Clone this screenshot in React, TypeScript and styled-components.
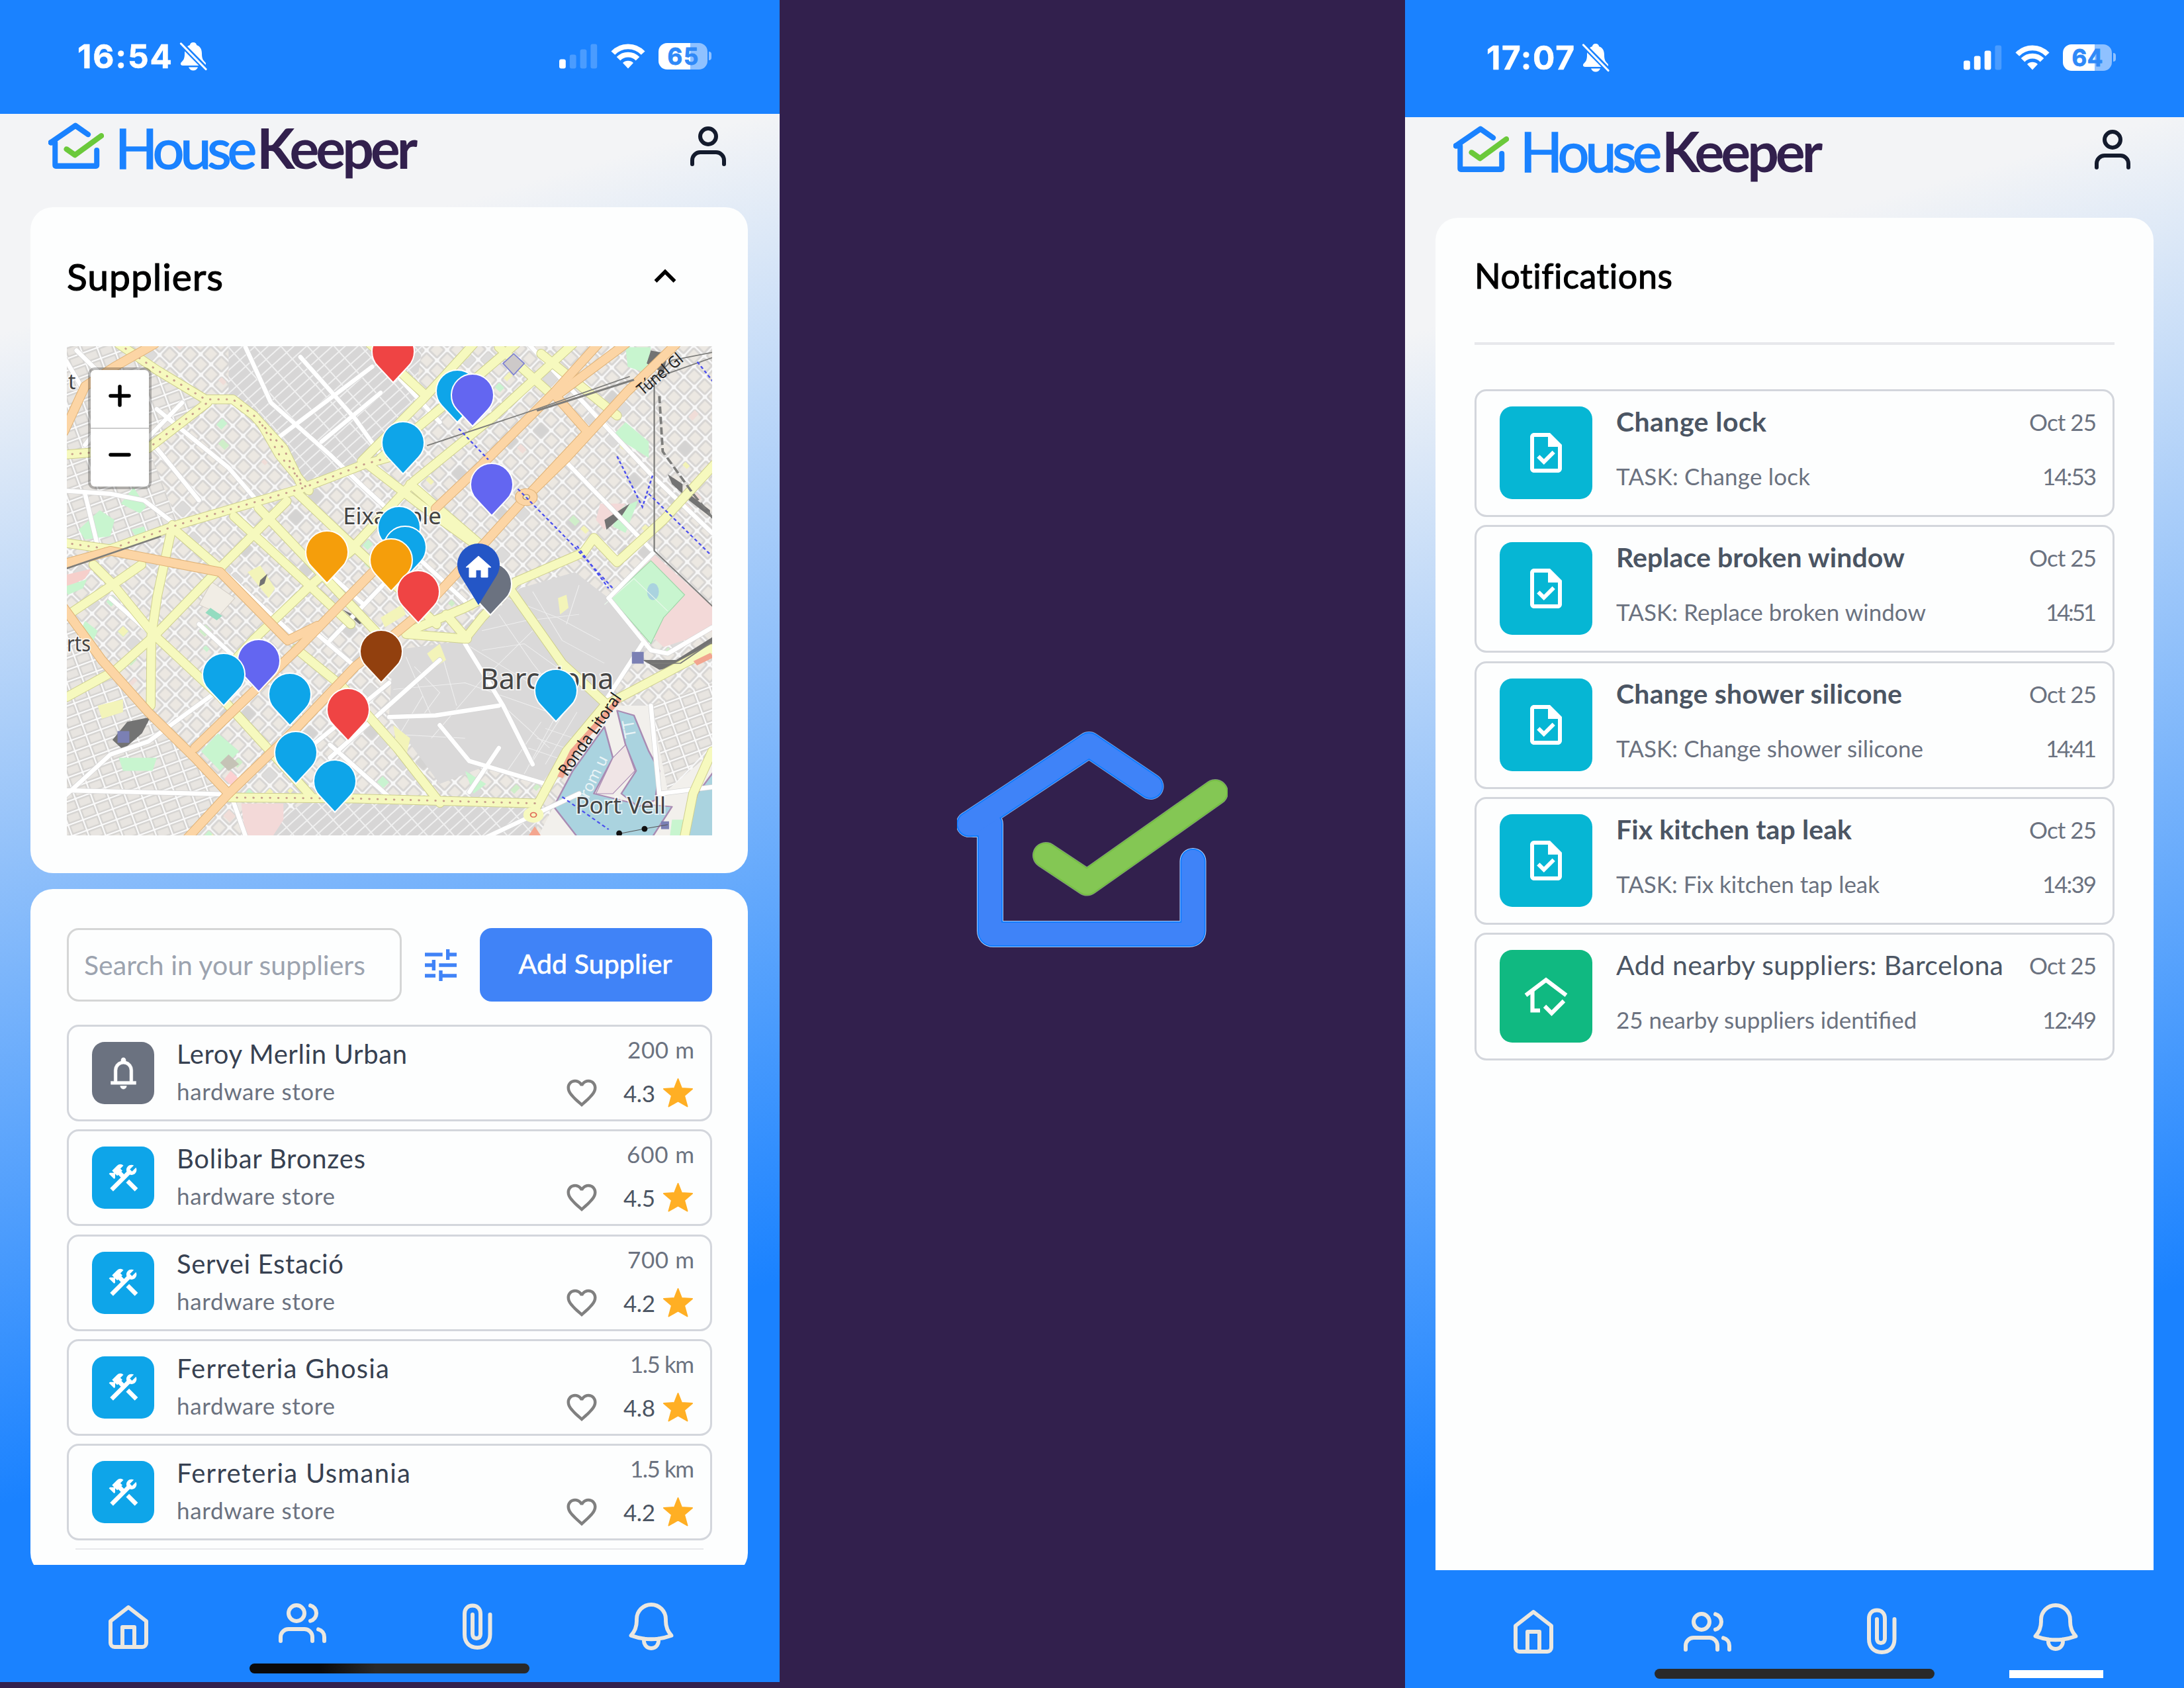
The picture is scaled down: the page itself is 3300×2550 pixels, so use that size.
import React, { useLayoutEffect, useRef, useState } from 'react';
import styled, { createGlobalStyle } from 'styled-components';
import { FiHome, FiUsers, FiUser } from 'react-icons/fi';
import { MdConstruction, MdTune, MdFavoriteBorder, MdOutlineTask } from 'react-icons/md';

const GlobalStyle = createGlobalStyle`
  * { box-sizing: border-box; }
  body { margin: 0; background: #32204d; }
`;

const UI_FONT = "'Lato', 'Liberation Sans', sans-serif";
const SYSTEM_FONT = "'Inter', 'Liberation Sans', sans-serif";
const BLUE = '#1a82ff';

/* ---------- text ---------- */

const LabelText = styled.span<{ $size: number; $line: number; $weight: number; $color: string; $system?: boolean; $ink?: number }>`
  display: block;
  flex: none;
  white-space: nowrap;
  font-family: ${p => (p.$system ? SYSTEM_FONT : UI_FONT)};
  font-size: ${p => p.$size}px;
  line-height: ${p => p.$line}px;
  font-weight: ${p => p.$weight};
  color: ${p => p.$color};
  -webkit-text-stroke: ${p => p.$ink ?? 0}px ${p => p.$color};
`;

type LabelProps = {
  children: string;
  size: number;
  line: number;
  color: string;
  weight?: number;
  width?: number;
  system?: boolean;
  ink?: number;
};

/* Tracks its letters so that the text run takes the given width. */
function Label({ children, size, line, color, weight = 400, width, system, ink }: LabelProps) {
  const ref = useRef<HTMLSpanElement>(null);
  const [tracking, setTracking] = useState(0);
  useLayoutEffect(() => {
    const el = ref.current;
    if (!el || !width) return;
    const range = document.createRange();
    range.selectNodeContents(el);
    const natural = range.getBoundingClientRect().width - tracking * children.length;
    const next = (width - natural) / (children.length - 1);
    if (Math.abs(next - tracking) > 0.01) setTracking(next);
  }, [children, width, tracking]);
  return (
    <LabelText
      ref={ref}
      $size={size}
      $line={line}
      $weight={weight}
      $color={color}
      $system={system}
      $ink={ink}
      style={{ letterSpacing: tracking, marginRight: -tracking }}
    >
      {children}
    </LabelText>
  );
}

/* ---------- brand mark ---------- */

const ROOF = 'M63.5 194 L244.5 74 L337.5 137';
const WALLS = 'M63.5 194 H95 V355 Q95 360 100 360 H396 Q401.500 360 401.500 355 V250';
const TICK = 'M179 241 L241.500 282.500 L435 146';

function Mark({ width, height, blue, green, edged }: { width: number; height: number; blue: string; green: string; edged?: boolean }) {
  return (
    <svg width={width} height={height} viewBox="45 52 409 328" preserveAspectRatio="none" fill="none" strokeLinecap="round" strokeLinejoin="round">
      {edged && (
        <g strokeWidth="40">
          <path d={WALLS} stroke="#b3cdfa" />
          <path d={ROOF} stroke="#7f9fe0" />
          <path d={TICK} stroke="#7f9a78" />
        </g>
      )}
      {edged && (
        <g strokeWidth="38">
          <path d={WALLS} stroke="#0a7bff" />
          <path d={ROOF} stroke="#0a7bff" />
          <path d={TICK} stroke="#76c043" />
        </g>
      )}
      <g strokeWidth={edged ? 34.5 : 39}>
        <path d={WALLS} stroke={blue} />
        <path d={ROOF} stroke={blue} />
        <path d={TICK} stroke={green} />
      </g>
    </svg>
  );
}

/* ---------- phone shell ---------- */

const Page = styled.main`
  width: 3300px;
  height: 2550px;
  display: flex;
  align-items: flex-start;
  background: #32204d;
  overflow: hidden;
`;

const Phone = styled.section<{ $width: number; $height: number }>`
  flex: none;
  display: flex;
  flex-direction: column;
  width: ${p => p.$width}px;
  height: ${p => p.$height}px;
  overflow: hidden;
  background: linear-gradient(164deg, #f3f4f6 17.5%, ${BLUE} 79%);
`;

const Splash = styled.section`
  flex: 1;
  align-self: stretch;
  display: flex;
  justify-content: center;
  align-items: center;
  padding: 0 1px 16px 0;
`;

const StatusBar = styled.div<{ $height: number; $left: number }>`
  flex: none;
  height: ${p => p.$height}px;
  display: flex;
  align-items: center;
  justify-content: space-between;
  padding: 0 109px 3px ${p => p.$left}px;
  background: ${BLUE};
`;

const StatusGroup = styled.div<{ $gap: number }>`
  display: flex;
  align-items: center;
  gap: ${p => p.$gap}px;
`;

const Battery = styled.div<{ $level: number }>`
  position: relative;
  width: 74px;
  height: 40px;
  display: flex;
  align-items: center;
  justify-content: center;
  border-radius: 13px;
  background: linear-gradient(90deg, #fff ${p => p.$level}%, #8fc1ff ${p => p.$level}%);
  &::after {
    content: '';
    position: absolute;
    left: 76px;
    top: 13px;
    width: 4px;
    height: 13px;
    border-radius: 0 4px 4px 0;
    background: #8fc1ff;
  }
`;

const BellSlash = () => (
  <svg width="42" height="44" viewBox="0 0 42 44">
    <path d="M21 1c3 0 5 2 5 4 6 2 8 7 8 13 0 8 2 10 5 13 2 2 1 5-2 5H5c-3 0-4-3-2-5 3-3 5-5 5-13 0-6 2-11 8-13 0-2 2-4 5-4z" fill="#fff" />
    <path d="M14 38.500h14c-1 3-4 5-7 5s-6-2-7-5z" fill="#fff" />
    <path d="M3 3.500L41 42" stroke={BLUE} strokeWidth="8" />
    <path d="M2.500 3L40 41.500" stroke="#fff" strokeWidth="3.200" strokeLinecap="round" />
  </svg>
);

const Signal = ({ bars }: { bars: number }) => (
  <svg width="58" height="38" viewBox="0 0 58 38">
    {[14, 21, 29, 37].map((h, i) => (
      <rect key={h} x={i * 15.8} y={37.5 - h} width="9.800" height={h} rx="3" fill={i < bars ? '#fff' : '#4a9cff'} />
    ))}
  </svg>
);

const Wifi = () => (
  <svg width="52" height="38" viewBox="0 0 52 38" fill="none" stroke="#fff" strokeWidth="7.800">
    <path d="M3.300 14.200C15.500 1 36.500 1 48.700 14.200" />
    <path d="M11.500 22.800C19.500 14.500 32.500 14.500 40.500 22.800" />
    <path d="M26 37.500l-8-8.500c4.500-4.200 11.500-4.200 16 0z" fill="#fff" stroke="none" />
  </svg>
);

function Status({ time, timeWidth, left, bars, charge, height }: { time: string; timeWidth: number; left: number; bars: number; charge: string; height: number }) {
  return (
    <StatusBar $height={height} $left={left}>
      <StatusGroup $gap={11}>
        <Label size={49.5} line={60} weight={700} color="#fff" width={timeWidth} ink={0.6} system>{time}</Label>
        <BellSlash />
      </StatusGroup>
      <StatusGroup $gap={20}>
        <Signal bars={bars} />
        <Wifi />
        <Battery $level={65}>
          <Label size={35} line={38} weight={700} color="#2f89f8" width={47} ink={0.8} system>{charge}</Label>
        </Battery>
      </StatusGroup>
    </StatusBar>
  );
}

const BrandBar = styled.header<{ $height: number }>`
  flex: none;
  height: ${p => p.$height}px;
  display: flex;
  align-items: flex-start;
  padding: 13px 72px 0 73px;
  color: #141b2d;
  > svg:last-child { margin: 0 0 0 auto; }
`;

const Wordmark = styled.div`
  display: flex;
  gap: 0;
  margin: -4px 0 0 17px;
`;

function Brand({ height }: { height: number }) {
  return (
    <BrandBar $height={height}>
      <Mark width={84} height={70} blue={BLUE} green="#6bc93b" />
      <Wordmark>
        <Label size={84} line={84} color={BLUE} width={214} ink={1.7}>House</Label>
        <Label size={84} line={84} color="#32204d" weight={700} width={243}>Keeper</Label>
      </Wordmark>
      <FiUser size={72} />
    </BrandBar>
  );
}

const Body = styled.div<{ $right: number }>`
  flex: 1;
  min-height: 0;
  overflow: hidden;
  display: flex;
  flex-direction: column;
  gap: 24px;
  padding: 0 ${p => p.$right}px 0 46px;
`;

const Card = styled.section<{ $height: number; $pad: string }>`
  flex: none;
  display: flex;
  flex-direction: column;
  height: ${p => p.$height}px;
  padding: ${p => p.$pad};
  border-radius: 34px;
  background: #fdfefe;
`;

/* ---------- bottom navigation ---------- */

const NavBar = styled.nav<{ $height: number }>`
  position: relative;
  flex: none;
  height: ${p => p.$height}px;
  display: grid;
  grid-template-columns: repeat(4, 1fr);
  align-items: start;
  justify-items: center;
  padding: 0 62px;
  background: ${BLUE};
  color: #ebe7df;
`;

const NavItem = styled.div<{ $top: number }>`
  display: flex;
  padding-top: ${p => p.$top}px;
`;

const HomeIndicator = styled.div<{ $top: number; $shaded?: boolean }>`
  position: absolute;
  left: 377px;
  top: ${p => p.$top}px;
  width: 423px;
  height: 15px;
  border-radius: 8px;
  background: ${p => (p.$shaded ? 'linear-gradient(90deg, #0a0a0a 25%, #292929 45%)' : '#292929')};
`;

const ActiveLine = styled.div`
  position: absolute;
  left: 913px;
  top: 151px;
  width: 142px;
  height: 12px;
  background: #fff;
`;

const Clip = () => (
  <svg width="48" height="72" viewBox="0 0 48 72" fill="none" stroke="currentColor" strokeWidth="6" strokeLinecap="round">
    <path d="M43.500 18V48C43.500 60.500 36 68 24.300 68C12.500 68 5 60.500 5 48V17C5 9 10 4.500 17 4.500C24 4.500 29 9 29 17V47.500C29 51.500 27 54 23 54C19 54 17 51.500 17 47.500V18" />
  </svg>
);

const Bell = () => (
  <svg width="88" height="88" viewBox="0 0 24 24" fill="none" stroke="currentColor" strokeWidth="1.600" strokeLinecap="round" strokeLinejoin="round">
    <path d="M14.857 17.082a23.848 23.848 0 0 0 5.454-1.310A8.967 8.967 0 0 1 18 9.750V9A6 6 0 0 0 6 9v.75a8.967 8.967 0 0 1-2.312 6.022c1.733.64 3.560 1.085 5.455 1.310m5.714 0a24.255 24.255 0 0 1-5.714 0m5.714 0a3 3 0 1 1-5.714 0" />
  </svg>
);

function Navigation({ height, tops, children }: { height: number; tops: number[]; children: React.ReactNode }) {
  return (
    <NavBar $height={height}>
      <NavItem $top={tops[0]}><FiHome size={72} /></NavItem>
      <NavItem $top={tops[1]}><FiUsers size={72} /></NavItem>
      <NavItem $top={tops[2]}><Clip /></NavItem>
      <NavItem $top={tops[3]}><Bell /></NavItem>
      {children}
    </NavBar>
  );
}

/* ---------- map ---------- */

const MapFrame = styled.div`
  position: relative;
  width: 975px;
  height: 739px;
  overflow: hidden;
  background: #e4e3e1;
`;

const Pin = styled.svg`
  position: absolute;
  width: 70px;
  height: 84px;
`;

const ZoomBox = styled.div`
  position: absolute;
  left: 32px;
  top: 32px;
  width: 96px;
  height: 184px;
  border: 4px solid rgba(0, 0, 0, 0.25);
  border-radius: 10px;
  background-clip: padding-box;
  background-color: #fff;
  display: flex;
  flex-direction: column;
`;

const ZoomButton = styled.button`
  flex: 1;
  display: flex;
  align-items: center;
  justify-content: center;
  padding: 0 0 10px;
  border: 0;
  background: transparent;
  & + & { border-top: 2px solid #ccc; }
`;

/* Streets in survey units; the group that draws them scales to pixels. */
const ORANGE = [
  'M10 290L60 150L130 90L225 20', 'M300 1540L400 1400L560 1200L700 1010L850 850L1000 640L1105 490L1200 370L1345 165L1460 20',
  'M400 1400L320 1290L210 1150L100 990L10 830', 'M10 695L120 655L380 720L540 930L610 885',
  'M320 1260L560 960L745 715', 'M890 525L1000 390L1170 170L1275 20', 'M1105 490L1250 290L1175 180L1340 20',
];
const YELLOW = [
  'M140 20L230 100L345 190L410 190L460 240L530 340L575 460', 'M10 360L210 340L350 200',
  'M10 630L120 650L280 575L450 510L570 465L720 390L830 350', 'M400 1412L700 1415L1130 1430',
  'M480 270L520 360L590 470', 'M725 385L850 510L1000 650L1190 1000L1290 1120',
  'M1125 1450L1200 1270L1290 1130L1545 955', 'M715 380L860 190L910 120L980 20',
  'M690 650L840 440L1030 240L1215 20', 'M760 370L900 220L1080 20', 'M1140 50L1320 240', 'M1040 30L1160 170',
  'M820 910L960 925L1000 860L1080 750L1240 660L1265 615L1320 690L1430 560L1550 390',
  'M735 20L860 170', 'M830 900L960 830L1020 790', 'M915 850L965 925', 'M1545 1270L1500 1400L1480 1530', 'M830 450L1000 640',
];
/* Eixample avenues, already in pixels. */
const AVENUES = [
  'M347 220L500 364L560 420', 'M290 244L467 430L500 470', 'M253 257L370 364L430 420', 'M163 277L233 337',
  'M333 234L230 337L133 437L73 490L0 530', 'M433 307L367 363L283 443L258 470', 'M40 330L70 360L133 437L233 530L310 614L370 680',
  'M113 330L70 360L0 407', 'M160 270L137 377L128 437L127 543', 'M347 457L417 514L500 607L565 690',
];
const WHITE = [
  'M10 1390L400 1402', 'M515 310L740 90', 'M440 30L500 200L640 360L720 460L830 590', 'M10 1410L120 1280L210 1240L400 1060',
  'M640 930L780 740', 'M1300 800L1410 655', 'M1300 800L1400 960L1440 970L1545 890', 'M900 1190L970 1300L1150 1370', 'M1290 1120L1380 940',
  'M780 1165L890 1160L1040 1130', 'M730 20L900 260', 'M960 940L1050 1130L1120 1310', 'M600 1250L780 1060', 'M860 690L960 810',
  'M1110 20L1400 420L1545 600', 'M1190 370L1400 650', 'M600 900L700 1010', 'M640 1250L780 1410', 'M10 470L120 480L200 500L280 580',
  'M40 40L150 180L60 330', 'M410 1420L440 1530', 'M970 1395L1040 1260', 'M1400 1130L1420 1400L1545 1380', 'M1000 1540L1230 1400',
  'M450 510L720 820', 'M280 590L500 850L560 920', 'M330 880L480 1060', 'M120 800L260 960', 'M640 1290L900 990', 'M230 220L400 400L460 490',
  'M10 60L60 170', 'M230 340L330 500', 'M170 360L290 200', 'M60 480L90 640', 'M570 60L700 250L760 360', 'M620 320L760 170',
];
const PLACES: { x: number; y: number; w: number; h: number; c: string }[] = (() => {
  let seed = 7;
  const rnd = () => ((seed = (seed * 16807) % 2147483647) / 2147483647);
  const tones = ['#c9f3d0', '#f3f3b8', '#d4d3d2', '#dcdbda', '#d4d3d2', '#dddcdb', '#f0ddd8', '#dcdbda', '#cfeec9'];
  return Array.from({ length: 620 }, () => {
    const i = Math.floor(rnd() * 64) - 4;
    const j = Math.floor(rnd() * 64) - 32;
    const tone = tones[Math.floor(rnd() * tones.length)];
    const grey = tone.startsWith('#d');
    const size = grey ? 16 : 6 + rnd() * 8;
    return { x: i * 22 + 3, y: j * 22 + 3, w: size, h: grey ? 16 : 6 + rnd() * 8, c: tone };
  });
})();

const CityMap = () => (
  <svg width="975" height="739" viewBox="0 0 977 739" preserveAspectRatio="none" fill="none">
    <defs>
      <pattern id="blocks" width="22" height="22" patternUnits="userSpaceOnUse" patternTransform="rotate(44)">
        <rect width="22" height="22" fill="#f8f8f8" />
        <rect x="2.800" y="2.800" width="16.400" height="16.400" rx="1.500" fill="#ece8e2" stroke="#d7d5d3" strokeWidth="3" />
      </pattern>
      <pattern id="dense" width="30" height="13" patternUnits="userSpaceOnUse" patternTransform="scale(1.564 2.031) rotate(-42)">
        <rect width="30" height="13" fill="#f0f0f0" />
        <rect x="1" y="1" width="28" height="11" fill="#d7d6d6" />
      </pattern>
      <pattern id="mixed" width="24" height="17" patternUnits="userSpaceOnUse" patternTransform="scale(1.564 2.031) rotate(-20)">
        <rect width="24" height="17" fill="#fbfbfb" />
        <rect x="2.300" y="2.300" width="19.500" height="12.500" fill="#e8e5e1" stroke="#d3d1cf" strokeWidth="2.200" />
      </pattern>
    </defs>
    <rect width="977" height="739" fill="url(#blocks)" />
    <g transform="rotate(44)">
      {PLACES.map((p, i) => (
        <rect key={i} x={p.x} y={p.y} width={p.w} height={p.h} fill={p.c} />
      ))}
    </g>
    <g transform="scale(.6394 .4923) translate(-17 -27)">
      <path d="M400 20H860L840 190L720 380L570 450L470 240L400 190Z" fill="url(#dense)" />
      <path d="M10 20H140L340 190L210 330L10 350Z" fill="url(#mixed)" />
      <path d="M10 370L210 340L280 570L120 650L10 620Z" fill="url(#mixed)" />
      <path d="M10 850L210 1150L400 1400L300 1540H10Z" fill="url(#mixed)" />
      <path d="M600 1410L1130 1430V1540H440Z" fill="url(#dense)" />
    </g>
    <g transform="scale(.6394 .4923) translate(-17 -27)">
      <path d="M1290 1130L1400 1130L1440 1390L1545 1270V1540H1130Z" fill="#f2f0ec" />
      <path d="M1400 1130L1545 1060V1250L1440 1390Z" fill="url(#mixed)" />
      <path d="M790 960L960 930L1040 830L1090 770L1220 720L1300 800L1390 960L1290 1110L1200 1270L1140 1370L1000 1320L900 1370L780 1160Z" fill="#dad9d9" />
      <g stroke="#efefef" strokeWidth="1.800">
        <path d="M820 980L880 1160M900 950L940 1130M960 940L1190 1120M1040 850L1120 1000L1200 1130M1120 780L1190 930L1290 1000M790 1080L960 1060L1180 1160M820 1220L960 1230M1000 900L1100 870L1230 850M1140 1180L1060 1330M1180 1150L1100 1340M860 1100L790 1250M1000 1050L880 1230M1120 900L1010 1040M1050 1130L1160 1260M1230 760L1200 880" />
        <path d="M1150 1200L1240 1240M1130 1230L1220 1270M1110 1260L1200 1300M1200 1140L1120 1300M1225 1150L1150 1310M1060 800L1180 860L1280 930M1000 960L1100 940L1250 1080M840 1010L900 1090L860 1160" />
      </g>
      <g fill="#f3f4b9">
        <path d="M870 970L900 940L915 990L890 1010Z" /><path d="M1180 800L1200 790L1205 830L1185 850Z" /><path d="M90 1130L150 1110L150 1150L100 1170Z" /><path d="M760 860L810 820L820 850L770 890Z" />
        <path d="M445 720L475 700L510 770L495 800Z" /><path d="M790 1190L830 1230L820 1290L800 1270Z" />
      </g>
      <path d="M1305 800L1410 668L1550 830V900L1430 950Z" fill="#f3d9d8" />
      <path d="M1305 800L1400 685L1480 790L1430 860L1400 940Z" fill="#c8f5cf" stroke="#9fd6a8" strokeWidth="2" />
      <ellipse cx="1405" cy="780" rx="14" ry="26" fill="#aad3df" />
      <g fill="#c8f5cf">
        <path d="M175 460L205 520L190 540L145 510Z" /><path d="M45 590L95 530L130 560L120 610L60 620Z" /><path d="M375 1215L425 1270L380 1330L335 1270Z" />
        <path d="M140 1290L230 1290L220 1330L150 1330Z" /><path d="M1340 30H1400L1390 110L1345 90Z" /><path d="M1340 260L1395 320V370L1310 300Z" />
        <path d="M1320 530L1370 500L1340 600L1310 580Z" /><path d="M960 1330L1010 1370L980 1400Z" /><path d="M1450 1480H1480L1470 1530H1445Z" />
        <path d="M60 870L90 900L80 930L50 900Z" /><path d="M90 640L130 630L130 660L100 665Z" /><path d="M170 590L200 580L205 605L180 610Z" />
      </g>
      <path d="M1290 820L1360 740L1440 840" stroke="#eaf9ec" strokeWidth="2" />
      <path d="M360 750L415 800L380 850L330 820Z" fill="#f1ede5" stroke="#d6d0c8" strokeWidth="2" />
      <path d="M400 1280L425 1310L400 1330L380 1305Z" fill="#c5c3b6" />
      <path d="M405 1330L425 1355L410 1380L390 1355Z" fill="#fcd0d2" />
      <path d="M430 1430H530V1480L500 1540H440Z" fill="#f3d9d8" />
      <path d="M10 730L75 710L60 740L10 770Z" fill="#f6cfcb" />
      <path d="M10 765L65 742L55 770L20 790Z" fill="#c8f5cf" />
      <path d="M1280 510H1340L1290 590L1270 560Z" fill="#f3d9d8" />
      <path d="M357 830L385 855L372 868L345 845Z" fill="#94dcc0" />
      <g fill="#aad3df" stroke="#a98bb3" strokeWidth="4" strokeLinejoin="round">
        <path d="M1290 1195L1310 1290L1265 1400L1360 1430L1450 1440L1400 1540H1230L1170 1440L1215 1330Z" />
        <path d="M1320 1145L1360 1160L1395 1270L1420 1330L1410 1420L1370 1440L1330 1400L1365 1330L1340 1250Z" />
        <path d="M1550 1330L1510 1400L1480 1540H1550Z" />
      </g>
      <path d="M1310 1290L1340 1250L1362 1330L1310 1400L1270 1400Z" fill="#f0e5e6" stroke="#a98bb3" strokeWidth="2" />
      <g fill="#737373">
        <path d="M125 1235L160 1180L215 1165L195 1215L150 1265Z" /><path d="M1380 990L1460 990L1545 920V950L1460 1010L1420 1020Z" />
        <path d="M1290 560L1350 510L1330 550L1295 590Z" /><path d="M670 835L725 870L710 880Z" /><path d="M1400 40L1440 50L1430 110L1390 80Z" />
        <path d="M1440 420L1475 450V480L1450 450Z" /><path d="M1480 470L1540 530V550L1490 500Z" /><path d="M475 745L492 725L485 755L472 765Z" />
      </g>
      <g strokeLinecap="round" strokeLinejoin="round">
        {WHITE.map(d => <path key={d} d={d} stroke="#d6d6d6" strokeWidth="8" vectorEffect="non-scaling-stroke" />)}
        {WHITE.map(d => <path key={d} d={d} stroke="#fff" strokeWidth="6.500" vectorEffect="non-scaling-stroke" />)}
        {YELLOW.map(d => <path key={d} d={d} stroke="#cfd08e" strokeWidth="14.500" vectorEffect="non-scaling-stroke" />)}
      </g>
    </g>
    <g strokeLinecap="round" strokeLinejoin="round">
      {AVENUES.map(d => <path key={d} d={d} stroke="#cfd08e" strokeWidth="14.500" />)}
      {AVENUES.map(d => <path key={d} d={d} stroke="#f6f9be" strokeWidth="12.500" />)}
    </g>
    <g transform="scale(.6394 .4923) translate(-17 -27)">
      <g strokeLinecap="round" strokeLinejoin="round">
        {YELLOW.map(d => <path key={d} d={d} stroke="#f6f9be" strokeWidth="12.500" vectorEffect="non-scaling-stroke" />)}
        {YELLOW.slice(0, 5).map(d => <path key={d} d={d} stroke="#c79f8c" strokeWidth="3" strokeDasharray="0.500 12" vectorEffect="non-scaling-stroke" />)}
        {ORANGE.map(d => <path key={d} d={d} stroke="#e0b377" strokeWidth="14.500" vectorEffect="non-scaling-stroke" />)}
        {ORANGE.map(d => <path key={d} d={d} stroke="#fcd5a5" strokeWidth="12.500" vectorEffect="non-scaling-stroke" />)}
      </g>
      <circle cx="1105" cy="490" r="26" fill="#fcd5a5" stroke="#e3b77d" strokeWidth="2" />
      <circle cx="1105" cy="490" r="8" fill="#f0e7c0" stroke="#b88d52" strokeWidth="2" />
      <path d="M1325 1110L1215 1270L1185 1350" stroke="#f2a58f" strokeWidth="14" />
      <path d="M1505 1000L1545 975" stroke="#f2a58f" strokeWidth="16" />
      <circle cx="1122" cy="1465" r="24" fill="#f6f9be" />
      <circle cx="1122" cy="1465" r="7" stroke="#e06a55" strokeWidth="3" />
      <path d="M1105 1540L1125 1500L1145 1540Z" fill="#f4a68f" />
      <g stroke="#7d7d7b" strokeWidth="3.500">
        <path d="M870 332L1130 220L1350 120" /><path d="M1130 225L1360 130" strokeWidth="6" /><path d="M10 712L240 610" strokeWidth="5" /><path d="M1408 140V655L1550 830" /><path d="M1380 160L1450 70L1550 45M1420 120L1550 60" />
        <path d="M1420 180L1428 350L1500 480L1550 560" strokeWidth="6" strokeDasharray="22 10" /><path d="M1400 1000L1470 1000L1550 930" />
      </g>
      <g stroke="#4b4fee" strokeWidth="4" strokeDasharray="9 7">
        <path d="M945 280L1015 375" /><path d="M1085 465L1210 630L1310 770" /><path d="M1225 640L1300 770" /><path d="M1320 365L1380 520L1405 420" /><path d="M1395 480L1540 665" /><path d="M1510 75L1550 140" /><path d="M1190 1410L1300 1510" />
      </g>
      <path d="M1050 80L1075 50L1100 80L1075 115Z" stroke="#7b7fd0" strokeWidth="3" fill="#cdc9c9" />
      <g fill="#7b80b4">
        <rect x="137" y="1208" width="28" height="36" /><rect x="1355" y="965" width="28" height="36" /><rect x="1424" y="1485" width="19" height="24" />
      </g>
      <path d="M1325 1523L1385 1508L1440 1495" stroke="#555" strokeWidth="2" />
      <g fill="#111"><ellipse cx="1325" cy="1522" rx="7" ry="9" /><ellipse cx="1385" cy="1508" rx="7" ry="9" /></g>
    </g>
    <g fontFamily="'Noto Sans', sans-serif" fill="#444" stroke="#fff" strokeWidth="4" strokeOpacity=".7" paintOrder="stroke">
      <text x="418" y="269" fontSize="34" textLength="149" lengthAdjust="spacingAndGlyphs">Eixample</text>
      <text x="626" y="518" fontSize="43" textLength="202" lengthAdjust="spacingAndGlyphs">Barcelona</text>
      <text x="770" y="706" fontSize="34" textLength="137" lengthAdjust="spacingAndGlyphs">Port Vell</text>
      <text x="2" y="65" fontSize="32">t</text>
      <text x="0" y="461" fontSize="33" textLength="36" lengthAdjust="spacingAndGlyphs">rts</text>
      <g fill="#222" stroke="none">
        <text fontSize="25" textLength="146" lengthAdjust="spacingAndGlyphs" transform="translate(757 651) rotate(-55)">Ronda Litoral</text>
        <text fontSize="25" textLength="82" lengthAdjust="spacingAndGlyphs" transform="translate(872 75) rotate(-40)">Túnel Gl</text>
      </g>
      <g fill="#e9f3f6" stroke="none">
        <text fontSize="24" transform="translate(790 684) rotate(-64)">rom u</text>
        <text fontSize="24" transform="translate(862 590) rotate(-100)">TT</text>
      </g>
    </g>
  </svg>
);

const PINS: [number, number, string][] = [
  [789, 137, '#ef4444'], [941, 258, '#0ea5e9'], [977, 270, '#6366f1'], [812, 418, '#0ea5e9'], [1023, 545, '#6366f1'],
  [803, 676, '#0ea5e9'], [817, 737, '#0ea5e9'], [633, 753, '#f59e0b'], [785, 776, '#f59e0b'], [849, 874, '#ef4444'],
  [1019, 849, '#6b7280'], [761, 1057, '#92400e'], [472, 1086, '#6366f1'], [389, 1128, '#0ea5e9'], [545, 1188, '#0ea5e9'],
  [683, 1236, '#ef4444'], [559, 1367, '#0ea5e9'], [651, 1456, '#0ea5e9'], [1175, 1176, '#0ea5e9'],
];

function SupplierMap() {
  return (
    <MapFrame>
      <CityMap />
      {PINS.map(([u, v, color]) => (
        <Pin key={`${u}-${v}`} viewBox="-35 -80 70 84" style={{ left: (u - 17) * 0.639 - 35.5, top: (v - 27) * 0.4923 - 79 }}>
          <path d="M0 0L-23.500 -25.200A32 32 0 1 1 23.500 -25.200Z" fill={color} stroke="#fff" strokeWidth="2" />
        </Pin>
      ))}
      <Pin viewBox="-35 -95 70 99" style={{ left: 587, top: 296, height: 99 }}>
        <path d="M0 0L-27.300 -44.200A32 32 0 1 1 27.300 -44.200Z" fill="#2456c6" />
        <path d="M0 -74L19 -57H14V-42H4V-53H-4V-42H-14V-57H-19Z" fill="#fff" stroke="#fff" strokeLinejoin="round" />
      </Pin>
      <ZoomBox>
        <ZoomButton>
          <svg width="34" height="34" viewBox="0 0 34 34" stroke="#000" strokeWidth="5.500" strokeLinecap="round"><path d="M3 17H31M17 3V31" /></svg>
        </ZoomButton>
        <ZoomButton>
          <svg width="34" height="34" viewBox="0 0 34 34" stroke="#000" strokeWidth="5.500" strokeLinecap="round"><path d="M3 17H31" /></svg>
        </ZoomButton>
      </ZoomBox>
    </MapFrame>
  );
}

/* ---------- suppliers ---------- */

const TitleRow = styled.div`
  display: flex;
  align-items: center;
  justify-content: space-between;
  height: 68px;
  padding: 0 54px 0 0;
  margin-bottom: 72px;
`;

const ToolRow = styled.div`
  display: flex;
  align-items: center;
  height: 111px;
  margin-bottom: 35px;
  color: #4083f7;
`;

const SearchBox = styled.div`
  width: 506px;
  height: 111px;
  display: flex;
  align-items: center;
  padding-left: 23px;
  border: 3px solid #d5d6d6;
  border-radius: 18px;
`;

const FilterButton = styled.div`
  width: 118px;
  display: flex;
  justify-content: center;
`;

const AddButton = styled.button`
  width: 351px;
  height: 111px;
  display: flex;
  align-items: center;
  justify-content: center;
  padding: 0 2px 4px 0;
  border: 0;
  border-radius: 18px;
  background: #4083f7;
`;

const List = styled.div<{ $gap: number }>`
  display: flex;
  flex-direction: column;
  gap: ${p => p.$gap}px;
`;

const ListRow = styled.article<{ $height: number; $lead: number }>`
  flex: none;
  display: flex;
  height: ${p => p.$height}px;
  border: 3px solid #d3d6dc;
  border-radius: 18px;
  padding: ${p => p.$lead}px 24px 0 35px;
`;

const Tile = styled.div<{ $size: number; $top: number; $color: string; $gap: number }>`
  flex: none;
  display: flex;
  align-items: center;
  justify-content: center;
  width: ${p => p.$size}px;
  height: ${p => p.$size}px;
  margin: ${p => p.$top}px ${p => p.$gap}px 0 0;
  border-radius: 19px;
  background: ${p => p.$color};
  color: #fff;
`;

const Lines = styled.div<{ $end?: boolean; $top?: number }>`
  flex: ${p => (p.$end ? 'none' : 1)};
  min-width: 0;
  display: flex;
  flex-direction: column;
  align-items: ${p => (p.$end ? 'flex-end' : 'flex-start')};
  padding-top: ${p => p.$top ?? 0}px;
`;

const RatingRow = styled.div`
  display: flex;
  align-items: center;
  height: 80px;
  margin-right: 1px;
  color: #808080;
  > svg:first-child { margin-right: 36px; }
  > svg:last-child { margin-left: 11px; }
`;

const FadedEdge = styled.div`
  flex: none;
  width: 949px;
  height: 2px;
  margin: 12px 0 0 13px;
  background: #e8e9ec;
`;

const NoticeBell = () => (
  <svg width="57" height="57" viewBox="0 -960 960 960" fill="currentColor" stroke="currentColor" strokeWidth="8">
    <path d="M160-200v-80h80v-280q0-83 50-147.500T420-792v-28q0-25 17.500-42.500T480-880q25 0 42.500 17.500T540-820v28q80 20 130 84.500T720-560v280h80v80H160Zm320 120q-33 0-56.500-23.500T400-160h160q0 33-23.500 56.500T480-80ZM320-280h320v-280q0-66-47-113t-113-47q-66 0-113 47t-47 113v280Z" />
  </svg>
);

const Star = () => (
  <svg width="47" height="46" viewBox="0 0 47 46">
    <path d="M23.500 2L29 16L45 17L33 27.200L37.500 43.500L23.500 35.500L9.500 43.500L14 27.200L2 17L18 16Z" fill="#ffaf24" stroke="#ffaf24" strokeWidth="2" strokeLinejoin="round" />
  </svg>
);

const SUPPLIERS = [
  { name: 'Leroy Merlin Urban', w: 348, distance: '200 m', dw: 101, rating: '4.3', grey: true },
  { name: 'Bolibar Bronzes', w: 285, distance: '600 m', dw: 102, rating: '4.5' },
  { name: 'Servei Estació', w: 252, distance: '700 m', dw: 101, rating: '4.2' },
  { name: 'Ferreteria Ghosia', w: 321, distance: '1.5 km', dw: 97, rating: '4.8' },
  { name: 'Ferreteria Usmania', w: 353, distance: '1.5 km', dw: 97, rating: '4.2' },
];

/* ---------- notifications ---------- */

const NoticeTitle = styled.div`
  height: 131px;
`;

const Divider = styled.div`
  height: 4px;
  margin-bottom: 67px;
  background: #e7e8ec;
`;

const HouseTick = () => (
  <svg width="70" height="62" viewBox="0 0 70 62" fill="none" stroke="#fff" strokeWidth="6.200">
    <path d="M4.500 29.500L35 6.500L65.500 29.500" />
    <path d="M14.500 23V52.500H26" />
    <path d="M33 46L43.500 56.500L62 38" />
  </svg>
);

const NOTICES = [
  { title: 'Change lock', w: 227, sub: 'TASK: Change lock', sw: 293, time: '14:53', tw: 82 },
  { title: 'Replace broken window', w: 436, sub: 'TASK: Replace broken window', sw: 468, time: '14:51', tw: 77 },
  { title: 'Change shower silicone', w: 432, sub: 'TASK: Change shower silicone', sw: 464, time: '14:41', tw: 77 },
  { title: 'Fix kitchen tap leak', w: 356, sub: 'TASK: Fix kitchen tap leak', sw: 398, time: '14:39', tw: 82 },
  { title: 'Add nearby suppliers: Barcelona', w: 585, sub: '25 nearby suppliers identified', sw: 454, time: '12:49', tw: 82, house: true },
];

export default function App() {
  return (
    <Page>
      <GlobalStyle />
      <Phone $width={1178} $height={2541}>
        <Status time="16:54" timeWidth={143} left={117} bars={1} charge="65" height={172} />
        <Brand height={141} />
        <Body $right={48}>
          <Card $height={1006} $pad="70px 54px 57px 55px">
            <TitleRow>
              <Label size={57} line={68} color="#000" width={236} ink={1.2}>Suppliers</Label>
              <svg width="34" height="24" viewBox="0 0 34 24" fill="none" stroke="#000" strokeWidth="5.500">
                <path d="M2.500 20L17 5.500L31.500 20" />
              </svg>
            </TitleRow>
            <SupplierMap />
          </Card>
          <Card $height={1037} $pad="59px 54px 0 55px">
            <ToolRow>
              <SearchBox>
                <Label size={41} line={50} color="#9ca3af" width={425}>Search in your suppliers</Label>
              </SearchBox>
              <FilterButton><MdTune size={64} /></FilterButton>
              <AddButton>
                <Label size={41} line={50} color="#fff" width={232} ink={0.7}>Add Supplier</Label>
              </AddButton>
            </ToolRow>
            <List $gap={12.25}>
              {SUPPLIERS.map(s => (
                <ListRow key={s.name} $height={146} $lead={8}>
                  <Tile $size={94} $top={15} $gap={34} $color={s.grey ? '#6b7280' : '#0ea5e9'}>
                    {s.grey ? <NoticeBell /> : <MdConstruction size={53} />}
                  </Tile>
                  <Lines $top={5}>
                    <Label size={40} line={57} color="#374151" width={s.w}>{s.name}</Label>
                    <Label size={35} line={54} color="#6b7280" width={239}>hardware store</Label>
                  </Lines>
                  <Lines $end>
                    <Label size={35} line={52} color="#6b7280" width={s.dw}>{s.distance}</Label>
                    <RatingRow>
                      <MdFavoriteBorder size={54} />
                      <Label size={35} line={44} color="#4b5563" width={48}>{s.rating}</Label>
                      <Star />
                    </RatingRow>
                  </Lines>
                </ListRow>
              ))}
            </List>
            <FadedEdge />
          </Card>
        </Body>
        <Navigation height={177} tops={[58, 52, 57, 49]}>
          <HomeIndicator $top={149} $shaded />
        </Navigation>
      </Phone>

      <Splash>
        <Mark width={409} height={328} blue="#3f83f8" green="#84c754" edged />
      </Splash>

      <Phone $width={1177} $height={2550}>
        <Status time="17:07" timeWidth={133} left={123} bars={3} charge="64" height={177} />
        <Brand height={152} />
        <Body $right={46}>
          <Card $height={2200} $pad="57px 59px 0">
            <NoticeTitle>
              <Label size={52} line={60} color="#000" width={299} ink={1.1}>Notifications</Label>
            </NoticeTitle>
            <Divider />
            <List $gap={12.3}>
              {NOTICES.map(n => (
                <ListRow key={n.title} $height={193} $lead={5}>
                  <Tile $size={140} $top={18} $gap={36} $color={n.house ? '#10b981' : '#06b6d4'}>
                    {n.house ? <HouseTick /> : <MdOutlineTask size={72} />}
                  </Tile>
                  <Lines>
                    <Label size={41} line={82} weight={n.house ? 400 : 700} color="#4b5563" width={n.w}>{n.title}</Label>
                    <Label size={35} line={82} color="#6b7280" width={n.sw}>{n.sub}</Label>
                  </Lines>
                  <Lines $end>
                    <Label size={35} line={82} color="#6b7280" width={102}>Oct 25</Label>
                    <Label size={35} line={82} color="#6b7280" width={n.tw}>{n.time}</Label>
                  </Lines>
                </ListRow>
              ))}
            </List>
          </Card>
        </Body>
        <Navigation height={178} tops={[57, 57, 56, 42]}>
          <HomeIndicator $top={149} />
          <ActiveLine />
        </Navigation>
      </Phone>
    </Page>
  );
}
